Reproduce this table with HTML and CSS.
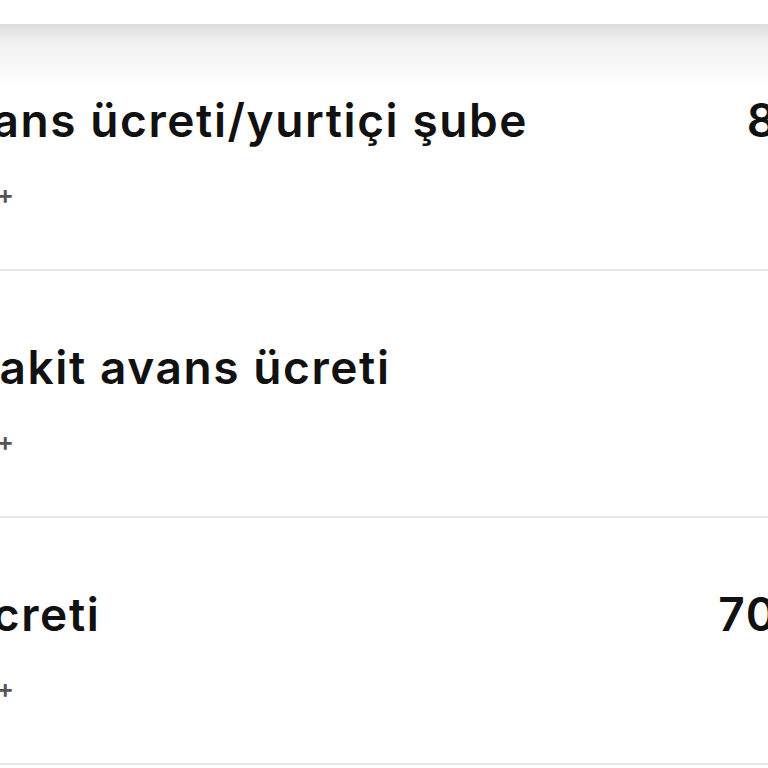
FILE: index.html
```html
<!DOCTYPE html>
<html lang="tr">
<head>
  <meta charset="UTF-8" />
  <meta name="viewport" content="width=device-width, initial-scale=1.0" />
  <title>Ücretler</title>
  <link rel="stylesheet" href="styles.css">
</head>
<body>
  <header class="top-bar"></header>

  <div class="fee-list">
    <div class="fee-row">
      <div class="fee-info">
        <div class="fee-title">Nakit avans ücreti/yurtiçi şube</div>
        <div class="fee-note">Faiz ve vergiler +</div>
      </div>
      <div class="fee-amount">8,50 TL</div>
    </div>

    <div class="fee-row">
      <div class="fee-info">
        <div class="fee-title">Yurtiçi nakit avans ücreti</div>
        <div class="fee-note">Faiz ve vergiler +</div>
      </div>
      <div class="fee-amount">5 TL</div>
    </div>

    <div class="fee-row">
      <div class="fee-info">
        <div class="fee-title">Hesap ücreti</div>
        <div class="fee-note">Faiz ve vergiler +</div>
      </div>
      <div class="fee-amount">70,00 TL</div>
    </div>
  </div>
</body>
</html>
```

FILE: styles.css
```css
body {
  margin: 0;
  background: #fff;
  font-family: 'Inter', 'Liberation Sans', sans-serif;
  color: #111;
  overflow: hidden;
}
.top-bar {
  position: relative;
  height: 24px;
  background: #fff;
  z-index: 1;
}
.top-bar::after {
  content: '';
  position: absolute;
  top: 100%;
  left: 0;
  right: 0;
  height: 62px;
  background: linear-gradient(rgba(0,0,0,0.13), rgba(0,0,0,0.06) 30%, rgba(0,0,0,0));
}
.fee-list {
  margin-left: -200px;
  margin-right: -160px;
}
.fee-row {
  display: flex;
  justify-content: space-between;
  align-items: flex-start;
  height: 245px;
  border-bottom: 2px solid #e6e6e6;
}
.fee-title {
  margin-top: 72px;
  font-size: 46px;
  line-height: 48px;
  font-weight: 600;
  letter-spacing: 1.6px;
  white-space: nowrap;
}
.fee-note {
  margin-top: 36px;
  font-size: 26px;
  line-height: 30px;
  font-weight: 600;
  color: #555;
  white-space: nowrap;
}
.fee-amount {
  margin-top: 72px;
  font-size: 46px;
  line-height: 48px;
  font-weight: 600;
  letter-spacing: 1.6px;
  white-space: nowrap;
}
```
